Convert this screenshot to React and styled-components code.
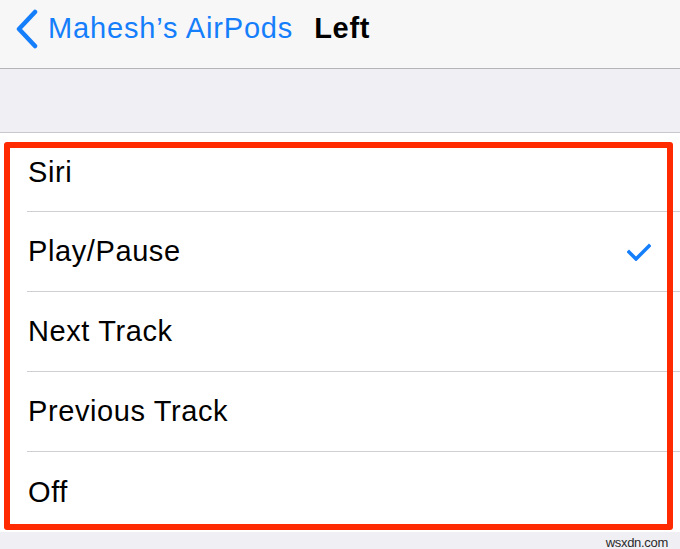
import React from 'react';
import styled, { createGlobalStyle } from 'styled-components';

const GlobalStyle = createGlobalStyle`
  html, body {
    margin: 0;
    padding: 0;
    background: #efeff4;
    font-family: "Liberation Sans", Arial, sans-serif;
    -webkit-font-smoothing: antialiased;
  }
`;

const Screen = styled.div`
  width: 680px;
  height: 549px;
  display: flex;
  flex-direction: column;
  background: #efeff4;
  overflow: hidden;
`;

const NavBar = styled.div`
  flex-shrink: 0;
  height: 69px;
  box-sizing: border-box;
  display: flex;
  align-items: center;
  padding: 0 0 11px 15px;
  background: #f7f7f8;
  border-bottom: 1px solid #b4b4b8;
`;

const BackButton = styled.div`
  display: flex;
  align-items: center;
  gap: 9px;
  color: #157efb;
  font-size: 29px;
  letter-spacing: 0.85px;
`;

const Title = styled.div`
  margin-left: 21px;
  font-size: 29px;
  font-weight: 700;
  letter-spacing: 0.7px;
  color: #000;
`;

const Spacer = styled.div`
  flex-shrink: 0;
  height: 63px;
  border-bottom: 1px solid #c8c7cc;
`;

const List = styled.div`
  flex-shrink: 0;
  position: relative;
  background: #fff;
  display: flex;
  flex-direction: column;
`;

const Row = styled.div`
  flex-shrink: 0;
  height: ${p => (p.first ? 79 : 80)}px;
  display: flex;
  align-items: center;
  justify-content: space-between;
  padding-right: 29px;
  padding-left: ${p => (p.last ? 28 : 1)}px;
  margin-left: ${p => (p.last ? 0 : 27)}px;
  box-sizing: border-box;
  font-size: 29px;
  letter-spacing: 0.6px;
  color: #000;
  border-bottom: ${p => (p.last ? 'none' : '1px solid #cfcfd3')};
`;

const Highlight = styled.div`
  position: absolute;
  left: 4px;
  top: 9px;
  width: 669px;
  height: 388px;
  box-sizing: border-box;
  border: 6px solid #ff2a00;
  border-radius: 3px;
  pointer-events: none;
`;

const Footer = styled.div`
  flex: 1;
  min-height: 0;
  display: flex;
  justify-content: flex-end;
  padding: 3px 12px 0 0;
  font-size: 13px;
  letter-spacing: -0.3px;
  color: #2a2a2a;
`;

const Chevron = () => (
  <svg width="24" height="40" viewBox="0 0 24 40">
    <path d="M20 3 L4 20 L20 37" fill="none" stroke="#157efb" strokeWidth="4.5" strokeLinecap="round" strokeLinejoin="round" />
  </svg>
);

const Check = () => (
  <svg width="24" height="18" viewBox="0 0 24 18">
    <path d="M2 9 L9 16 L22 3" fill="none" stroke="#157efb" strokeWidth="3.5" strokeLinecap="square" />
  </svg>
);

const options = ['Siri', 'Play/Pause', 'Next Track', 'Previous Track', 'Off'];

export default function App() {
  return (
    <Screen>
      <GlobalStyle />
      <NavBar>
        <BackButton>
          <Chevron />
          <span>Mahesh’s AirPods</span>
        </BackButton>
        <Title>Left</Title>
      </NavBar>
      <Spacer />
      <List>
        {options.map((o, i) => (
          <Row key={o} first={i === 0} last={i === options.length - 1}>
            <span>{o}</span>
            {o === 'Play/Pause' && <Check />}
          </Row>
        ))}
        <Highlight />
      </List>
      <Footer>wsxdn.com</Footer>
    </Screen>
  );
}
